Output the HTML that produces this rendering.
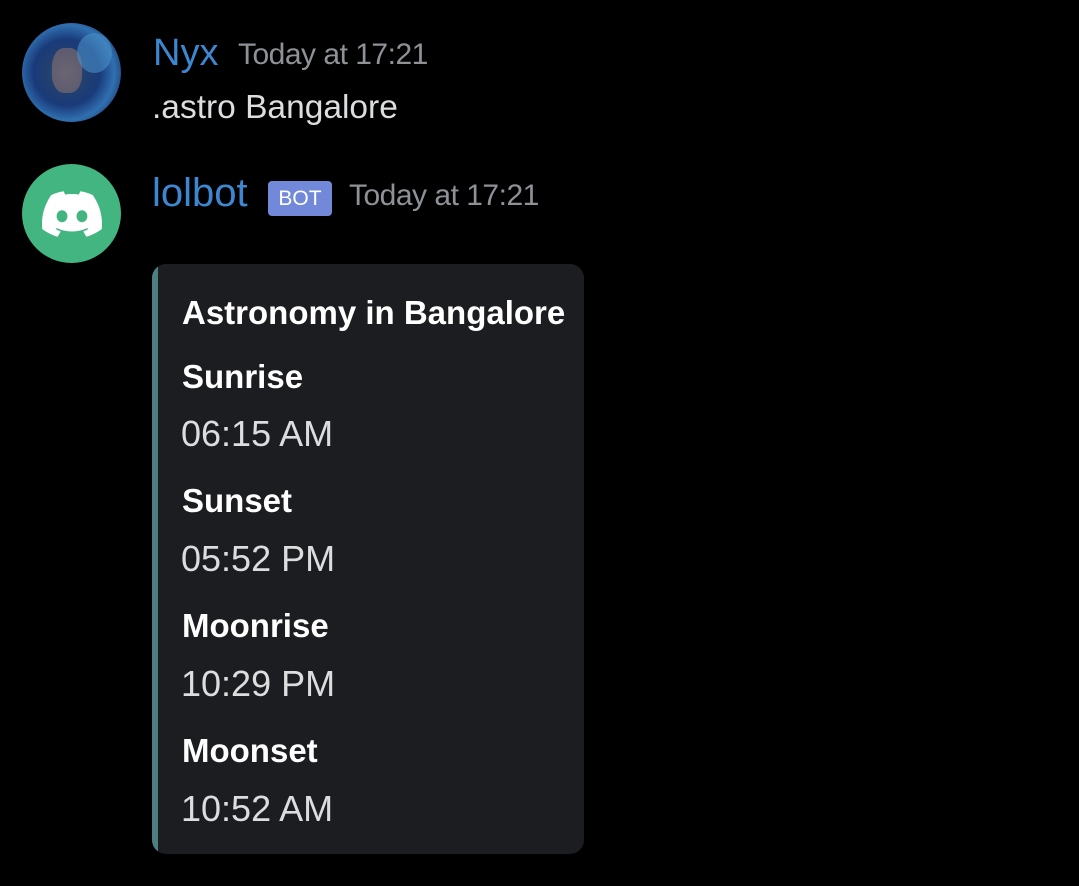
<!DOCTYPE html>
<html><head><meta charset="utf-8"><style>
html,body{margin:0;padding:0;background:#000;width:1079px;height:886px;overflow:hidden;font-family:"Liberation Sans",sans-serif;}
.t{position:absolute;white-space:nowrap;line-height:1;}
.av{position:absolute;left:22px;width:99px;height:99px;border-radius:50%;overflow:hidden;}
.embed{position:absolute;left:152px;top:264px;width:432px;height:590px;background:#1c1d21;border-radius:14px;overflow:hidden;}
.embed .bar{position:absolute;left:0;top:0;bottom:0;width:6px;background:#4e7f80;}
.h{color:#fff;font-weight:bold;font-size:33px;}
.v{color:#dcddde;font-size:36px;}
</style></head><body>
<div class="av" style="top:23px;background:radial-gradient(circle at 45% 50%,#4a5a78 0%,#22406e 25%,#1a3a7a 45%,#3070b0 65%,#183060 85%,#102040 100%);">
<div style="position:absolute;left:30px;top:25px;width:30px;height:45px;border-radius:40%;background:#7a6a70;opacity:.7"></div>
<div style="position:absolute;left:55px;top:10px;width:35px;height:40px;border-radius:50%;background:#4a90c8;opacity:.6"></div>
</div>
<div class="t" style="left:153px;top:34px;font-size:38px;color:#3c87d0;">Nyx</div>
<div class="t" style="left:238px;top:40px;font-size:30px;color:#8e9297;letter-spacing:-0.5px;">Today at 17:21</div>
<div class="t" style="left:152px;top:91px;font-size:33.5px;color:#dcddde;">.astro Bangalore</div>

<div class="av" style="top:164px;background:#43b581;">
<svg style="position:absolute;left:20px;top:27px" width="60" height="46" viewBox="0 0 127.14 96.36"><path fill="#fff" d="M107.7,8.07A105.15,105.15,0,0,0,81.47,0a72.06,72.06,0,0,0-3.36,6.83A97.68,97.68,0,0,0,49,6.83,72.37,72.37,0,0,0,45.64,0,105.89,105.89,0,0,0,19.39,8.09C2.79,32.65-1.71,56.6.54,80.21h0A105.730,105.73,0,0,0,32.71,96.36,77.7,77.7,0,0,0,39.6,85.25a68.42,68.42,0,0,1-10.85-5.18c.91-.66,1.8-1.340,2.660-2a75.57,75.57,0,0,0,64.32,0c.87.71,1.76,1.39,2.66,2a68.68,68.68,0,0,1-10.87,5.19,77,77,0,0,0,6.89,11.1A105.25,105.25,0,0,0,126.6,80.22h0C129.24,52.84,122.09,29.11,107.7,8.07ZM42.45,65.69C36.18,65.690,31,60,31,53s5-12.74,11.43-12.74S54,46,53.89,53,48.84,65.69,42.45,65.69Zm42.24,0C78.41,65.69,73.25,60,73.25,53s5-12.74,11.44-12.74S96.23,46,96.12,53,91.08,65.69,84.69,65.69Z"/></svg>
</div>
<div class="t" style="left:152px;top:173px;font-size:40px;color:#3c87d0;">lolbot</div>
<div style="position:absolute;left:268px;top:181px;width:64px;height:35px;background:#7289da;border-radius:4px;color:#fff;font-size:21px;line-height:36px;text-align:center;">BOT</div>
<div class="t" style="left:349px;top:181px;font-size:30px;color:#8e9297;letter-spacing:-0.5px;">Today at 17:21</div>

<div class="embed"><div class="bar"></div></div>
<div class="t h" style="left:182px;top:296px;">Astronomy in Bangalore</div>
<div class="t h" style="left:182px;top:360px;">Sunrise</div>
<div class="t v" style="left:181px;top:416px;">06:15 AM</div>
<div class="t h" style="left:182px;top:484px;">Sunset</div>
<div class="t v" style="left:181px;top:541px;">05:52 PM</div>
<div class="t h" style="left:182px;top:609px;">Moonrise</div>
<div class="t v" style="left:181px;top:666px;">10:29 PM</div>
<div class="t h" style="left:182px;top:734px;">Moonset</div>
<div class="t v" style="left:181px;top:791px;">10:52 AM</div>
</body></html>
